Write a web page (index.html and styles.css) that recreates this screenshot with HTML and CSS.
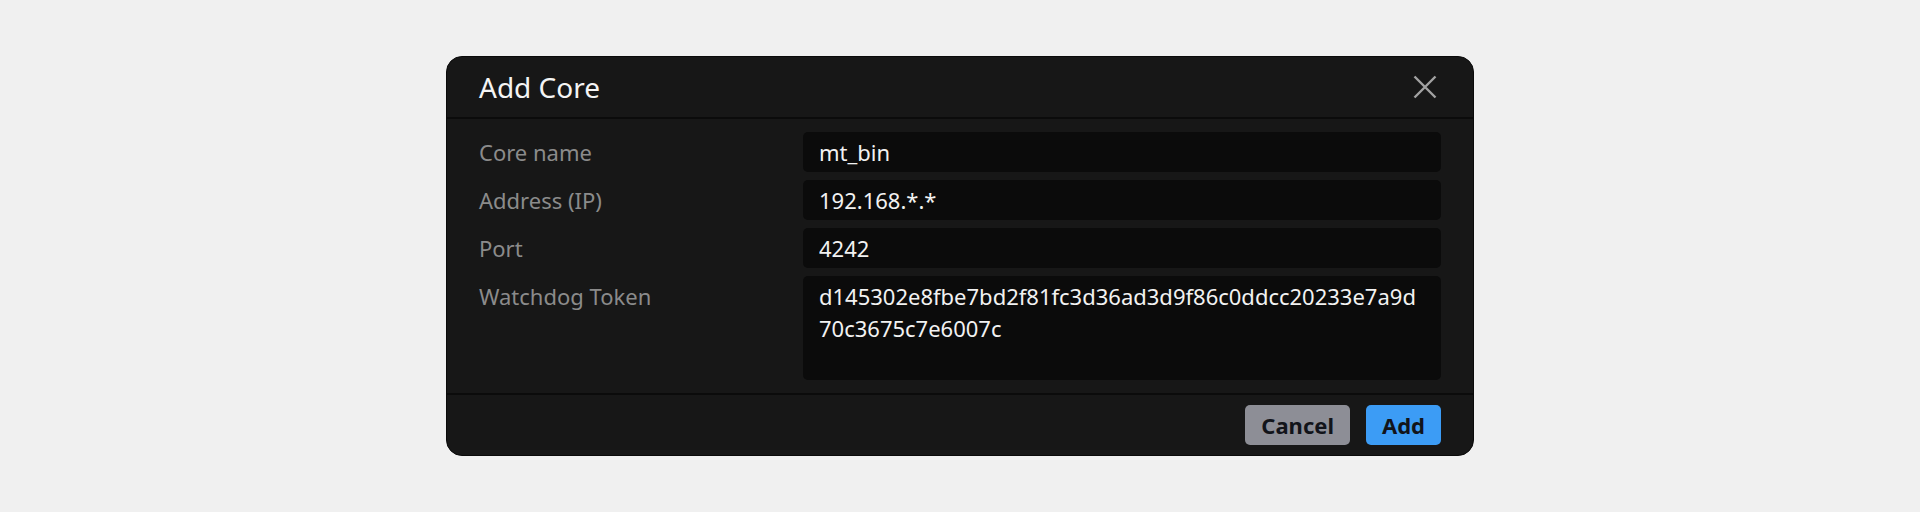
FILE: index.html
```html
<!DOCTYPE html>
<html lang="en">
<head>
<meta charset="utf-8">
<title>Add Core</title>
<link rel="stylesheet" href="styles.css">
</head>
<body>
<div class="overlay">
  <div class="dialog" role="dialog" aria-labelledby="dlg-title">
    <header class="dialog-header">
      <h1 id="dlg-title" class="dialog-title">Add Core</h1>
      <button class="close-btn" aria-label="Close">
        <svg width="24" height="24" viewBox="0 0 24 24" fill="none" stroke="currentColor" stroke-width="2.4" stroke-linecap="butt">
          <path d="M1.5 1.5 L22.5 22.5 M22.5 1.5 L1.5 22.5"/>
        </svg>
      </button>
    </header>
    <div class="dialog-body">
      <label class="field-label" for="f-name">Core name</label>
      <input class="field-input" id="f-name" type="text" value="mt_bin">
      <label class="field-label" for="f-addr">Address (IP)</label>
      <input class="field-input" id="f-addr" type="text" value="192.168.*.*">
      <label class="field-label" for="f-port">Port</label>
      <input class="field-input" id="f-port" type="text" value="4242">
      <label class="field-label" for="f-token">Watchdog Token</label>
      <textarea class="field-input field-textarea" id="f-token" rows="3">d145302e8fbe7bd2f81fc3d36ad3d9f86c0ddcc20233e7a9d70c3675c7e6007c</textarea>
    </div>
    <footer class="dialog-footer">
      <button class="btn btn-cancel">Cancel</button>
      <button class="btn btn-add">Add</button>
    </footer>
  </div>
</div>
</body>
</html>
```
FILE: styles.css
```css
* { box-sizing: border-box; }

html, body {
  margin: 0;
  padding: 0;
  height: 100%;
}

body {
  background: #f0f0f0;
  font-family: "Noto Sans", "Open Sans", sans-serif;
}

.overlay {
  height: 100%;
  display: flex;
  align-items: center;
  justify-content: center;
}

.dialog {
  width: 1028px;
  background: #171717;
  border: 1px solid #0a0a0a;
  border-radius: 16px;
  display: flex;
  flex-direction: column;
}

.dialog-header {
  display: flex;
  align-items: center;
  justify-content: space-between;
  padding: 11px 32px 11px 32px;
  border-bottom: 2px solid #0b0b0b;
}

.dialog-title {
  margin: 0;
  font-size: 28px;
  font-weight: 400;
  line-height: 38px;
  color: #f4f4f4;
}

.close-btn {
  width: 32px;
  height: 32px;
  padding: 0;
  border: none;
  background: transparent;
  color: #a2a2a2;
  display: flex;
  align-items: center;
  justify-content: center;
}

.dialog-body {
  display: grid;
  grid-template-columns: 324px 1fr;
  row-gap: 8px;
  padding: 13px 32px 13px 32px;
}

.field-label {
  font-size: 22px;
  line-height: 40px;
  color: #8b8b8b;
}

.field-input {
  display: block;
  width: 100%;
  height: 40px;
  margin: 0;
  padding: 0 16px;
  border: none;
  border-radius: 5px;
  background: #0b0b0b;
  color: #f2f2f2;
  font-family: "Noto Sans", "Open Sans", sans-serif;
  font-size: 22px;
  outline: none;
}

.field-textarea {
  height: 104px;
  padding: 4px 16px;
  line-height: 32px;
  resize: none;
  overflow: hidden;
  word-break: break-all;
}

.dialog-footer {
  display: flex;
  justify-content: flex-end;
  gap: 16px;
  padding: 10px 32px 10px 32px;
  border-top: 2px solid #0b0b0b;
}

.btn {
  height: 40px;
  padding: 0 16px;
  border: none;
  border-radius: 5px;
  font-family: "Noto Sans", "Open Sans", sans-serif;
  font-size: 22px;
  font-weight: 700;
  color: #12141a;
  line-height: 40px;
}

.btn-cancel {
  background: #8d8e96;
}

.btn-add {
  background: #3c9cf5;
}
```
